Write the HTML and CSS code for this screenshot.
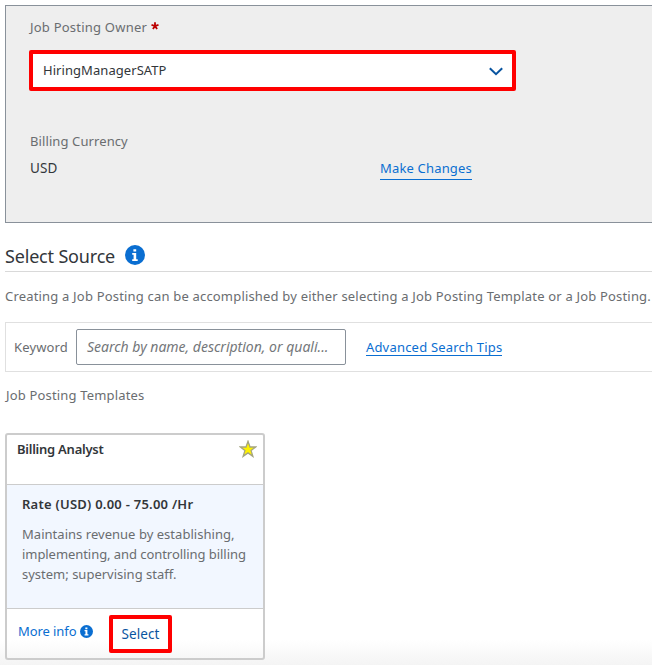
FILE: index.html
```html
<!DOCTYPE html>
<html lang="en">
<head>
<meta charset="utf-8">
<title>Create Job Posting</title>
<link rel="stylesheet" href="styles.css">
</head>
<body>
<main class="page">
  <section class="details">
    <div class="label"><span class="t-owner">Job Posting Owner</span><svg class="required" viewBox="0 0 8 8"><path d="M4 4V.3M4 4L.5 2.9M4 4l3.5-1.1M4 4L1.9 7.1M4 4l2.1 3.1"/></svg></div>
    <div class="dropdown">
      <span class="t-manager">HiringManagerSATP</span>
      <svg class="chevron" viewBox="0 0 14 9"><path d="M.8 1.2L7 7.2l6.2-6"/></svg>
    </div>
    <div class="label currency-label"><span class="t-currency">Billing Currency</span></div>
    <div class="currency-row">
      <span class="t-usd">USD</span>
      <a class="link t-changes">Make Changes</a>
    </div>
  </section>

  <header class="source-heading">
    <h1 class="t-heading">Select Source</h1>
    <svg class="info-large" viewBox="0 0 20 20"><circle cx="10" cy="10" r="10"/><path d="M8.4 4.2h2.8v2.4H8.4zM7.2 8h4v6.2h1.5v1.7H7.2v-1.7h1.4V9.7H7.2z"/></svg>
  </header>
  <p class="intro"><span class="t-intro">Creating a Job Posting can be accomplished by either selecting a Job Posting Template or a Job Posting.</span></p>

  <section class="search">
    <label class="t-keyword">Keyword</label>
    <div class="field"><span class="t-search">Search by name, description, or quali...</span></div>
    <a class="link tips t-tips">Advanced Search Tips</a>
  </section>

  <h2 class="templates-title"><span class="t-templates">Job Posting Templates</span></h2>

  <article class="card">
    <div class="card-top">
      <h3 class="t-analyst">Billing Analyst</h3>
      <svg class="star" viewBox="0 0 18 18"><path d="M9 1.3l2 5.7h5.7l-4.6 3.6 1.8 5.8L9 12.9l-4.9 3.5 1.8-5.8L1.3 7H7z"/></svg>
    </div>
    <div class="card-body">
      <h4><span class="t-rate">Rate (USD) 0.00 - 75.00 /Hr</span></h4>
      <p><span class="t-d1">Maintains revenue by establishing,</span><br><span class="t-d2">implementing, and controlling billing</span><br><span class="t-d3">system; supervising staff.</span></p>
    </div>
    <div class="card-footer">
      <a class="more"><span class="t-more">More info</span><svg class="info-small" viewBox="0 0 20 20"><circle cx="10" cy="10" r="10"/><path d="M8.2 3.8h3.2v2.6H8.2zM7 7.8h4.4v6.4H13V16H7v-1.8h1.4V9.6H7z"/></svg></a>
      <a class="select"><span class="t-select">Select</span></a>
    </div>
  </article>
</main>
</body>
</html>
```
FILE: styles.css
```css
* { box-sizing: border-box; }
body {
  margin: 0;
  font: 13px/20px "Noto Sans", "Open Sans", sans-serif;
  color: #6a6d70;
  background: #fff;
  overflow: hidden;
}
h1, h2, h3, h4, p { margin: 0; font-size: inherit; font-weight: 400; }
span { white-space: nowrap; }
svg { flex: none; fill: none; }
.page {
  height: 665px;
  padding: 5px 0 0 5px;
  background: linear-gradient(#fff 640px, #f4f4f4 665px);
}
.details {
  height: 218px;
  padding: 11px 0 0 24px;
  background: #eee;
  border: 1px solid #89919a;
  border-right: 0;
}
.label { display: flex; align-items: center; height: 20px; }
.required { width: 8px; height: 8px; margin: -2px 0 0 4px; stroke: #b00; stroke-width: 1.8; }
.dropdown {
  display: flex;
  align-items: center;
  justify-content: space-between;
  width: 487px;
  height: 41px;
  margin: 13px 0 0 -1px;
  padding: 0 9px 0 10px;
  background: #fff;
  border: 4px solid #f00;
  border-radius: 2px;
  color: #32363a;
}
.dropdown span { margin-bottom: 2px; }
.chevron { width: 14px; height: 9px; margin-top: 2px; stroke: #0854a0; stroke-width: 2; }
.currency-label { margin-top: 40px; }
.currency-row {
  display: grid;
  grid-template-columns: 350px auto;
  justify-content: start;
  margin-top: 7px;
  color: #32363a;
}
.link { height: 22px; color: #0a6ed1; border-bottom: 1px solid #0a6ed1; white-space: nowrap; }
.source-heading {
  display: flex;
  align-items: center;
  height: 49px;
  padding-top: 17px;
  border-bottom: 1px solid #d9d9d9;
}
.source-heading h1 { color: #32363a; font-size: 18px; line-height: 24px; white-space: nowrap; }
.info-large { width: 20px; height: 20px; margin: -2px 0 0 10px; }
svg circle { fill: #0a6ed1; }
svg circle + path { fill: #fff; }
.intro { margin-top: 14px; }
.search {
  display: flex;
  align-items: center;
  height: 50px;
  margin-top: 16px;
  padding-left: 8px;
  border: 1px solid #e0e0e0;
  border-right: 0;
}
.field {
  display: flex;
  align-items: center;
  width: 270px;
  height: 36px;
  margin: 0 20px 0 8px;
  padding-left: 10px;
  border: 1px solid #89919a;
  border-radius: 2px;
  font-style: italic;
  color: #74777a;
}
.tips { height: 18px; line-height: 18px; }
.templates-title { margin: 13px 0 0 1px; }
.card {
  width: 260px;
  height: 227px;
  margin-top: 28px;
  border: 2px solid #ccc;
  border-radius: 3px;
}
.card-top { display: flex; justify-content: space-between; height: 50px; padding: 4px 6px 0 10px; border-bottom: 1px solid #ccc; }
.card h3, .card h4 { color: #32363a; font-weight: 600; white-space: nowrap; }
.star { width: 18px; height: 18px; margin-top: 1px; fill: #fff200; stroke: #a5a580; stroke-width: 1.3; }
.card-body { height: 124px; padding: 9px 0 0 15px; background: #f2f7ff; border-bottom: 1px solid #ccc; }
.card-body p { margin-top: 10px; }
.card-footer { display: flex; padding: 6px 0 0 11px; }
.more { display: flex; align-items: center; width: 91px; height: 20px; margin-top: 6px; color: #0a6ed1; }
.info-small { width: 13px; height: 13px; margin-left: 4px; }
.select {
  display: flex;
  align-items: center;
  justify-content: center;
  width: 63px;
  height: 38px;
  border: 4px solid #f00;
  border-radius: 2px;
  background: #fff;
  color: #0854a0;
}

/* Tracking per text run */
.t-owner { letter-spacing: .22px; }
.t-manager { letter-spacing: .06px; }
.t-currency { letter-spacing: .1px; }
.t-usd { font-size: 13.5px; letter-spacing: .15px; }
.t-changes { letter-spacing: .17px; }
.t-heading { letter-spacing: -.18px; }
.t-intro { letter-spacing: .185px; }
.t-keyword { letter-spacing: .14px; }
.t-search { font-size: 14px; }
.t-tips { letter-spacing: .2px; }
.t-templates { letter-spacing: .17px; }
.t-analyst { letter-spacing: -.25px; }
.t-rate { letter-spacing: .25px; }
.t-d1 { letter-spacing: .03px; }
.t-d2 { letter-spacing: -.06px; }
.t-more { letter-spacing: -.08px; }
.t-select { font-size: 13.5px; letter-spacing: .1px; }
```
